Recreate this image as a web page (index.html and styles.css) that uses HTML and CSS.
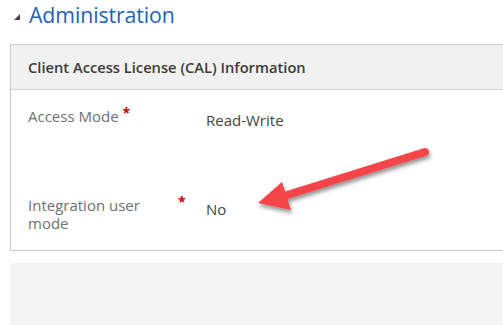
FILE: index.html
```html
<!DOCTYPE html>
<html>
<head>
<meta charset="utf-8">
<link rel="stylesheet" href="styles.css">
</head>
<body>
<div class="page">
  <div class="section-title">
    <span class="tri"></span>
    <span class="title-text">Administration</span>
  </div>
  <div class="card">
    <div class="card-head">Client Access License (CAL) Information</div>
    <div class="card-body">
      <div class="row row1">
        <div class="label"><span>Access Mode</span><span class="star">*</span></div>
        <div class="value">Read-Write</div>
      </div>
      <div class="row row2">
        <div class="label label2"><span>Integration user mode</span><span class="star star2">*</span></div>
        <div class="value value2">No</div>
      </div>
    </div>
  </div>
  <div class="grey-box"></div>
  <svg class="arrow" width="503" height="325" viewBox="0 0 503 325">
    <defs>
      <filter id="sh" x="-20%" y="-40%" width="140%" height="180%">
        <feGaussianBlur in="SourceAlpha" stdDeviation="2"/>
        <feOffset dx="1" dy="3" result="b"/>
        <feComponentTransfer><feFuncA type="linear" slope="0.45"/></feComponentTransfer>
        <feMerge><feMergeNode/><feMergeNode in="SourceGraphic"/></feMerge>
      </filter>
    </defs>
    <g filter="url(#sh)" fill="#f4444a">
      <line x1="425" y1="152" x2="284" y2="196" stroke="#f4444a" stroke-width="8" stroke-linecap="round"/>
      <polygon points="258,203 282,182 291,210"/>
    </g>
  </svg>
</div>
</body>
</html>
```
FILE: styles.css
```css
html, body {
  margin: 0;
  padding: 0;
  background: #ffffff;
  overflow: hidden;
}
.page {
  position: relative;
  width: 503px;
  height: 325px;
  font-family: "Open Sans", "Noto Sans", sans-serif;
}
.section-title {
  display: flex;
  align-items: center;
  height: 29px;
  padding-left: 14px;
}
.tri {
  width: 0;
  height: 0;
  border-left: 6px solid transparent;
  border-bottom: 6px solid #444;
  margin-right: 9px;
  margin-top: 5px;
}
.title-text {
  font-size: 21.3px;
  color: #1e63b6;
  letter-spacing: -0.1px;
}
.card {
  margin-top: 15px;
  margin-left: 10px;
  margin-right: -20px;
  border: 1px solid #cccccc;
  height: 205px;
}
.card-head {
  background: #f1f1f1;
  border-bottom: 1px solid #d6d6d6;
  height: 44px;
  display: flex;
  align-items: center;
  padding-left: 17px;
  font-size: 14.7px;
  font-weight: 600;
  color: #3b3b3b;
}
.card-body {
  padding-left: 17px;
}
.row {
  display: flex;
}
.row1 {
  padding-top: 17px;
  height: 89px;
}
.label {
  width: 178px;
  color: #707070;
  font-size: 15px;
  line-height: 18px;
  display: flex;
}
.label2 span:first-child {
  width: 140px;
}
.star {
  color: #cc0000;
  font-size: 14px;
  font-weight: 700;
  margin-left: 4px;
  line-height: 12px;
}
.star2 {
  margin-left: 10px;
  margin-top: 0;
}
.value {
  color: #444;
  font-size: 15px;
  line-height: 18px;
  padding-top: 4px;
}
.value2 {
  padding-top: 4px;
}
.grey-box {
  margin-top: 12px;
  margin-left: 10px;
  height: 62px;
  background: #f3f3f3;
}
.arrow {
  position: absolute;
  left: 0;
  top: 0;
  pointer-events: none;
}
```
